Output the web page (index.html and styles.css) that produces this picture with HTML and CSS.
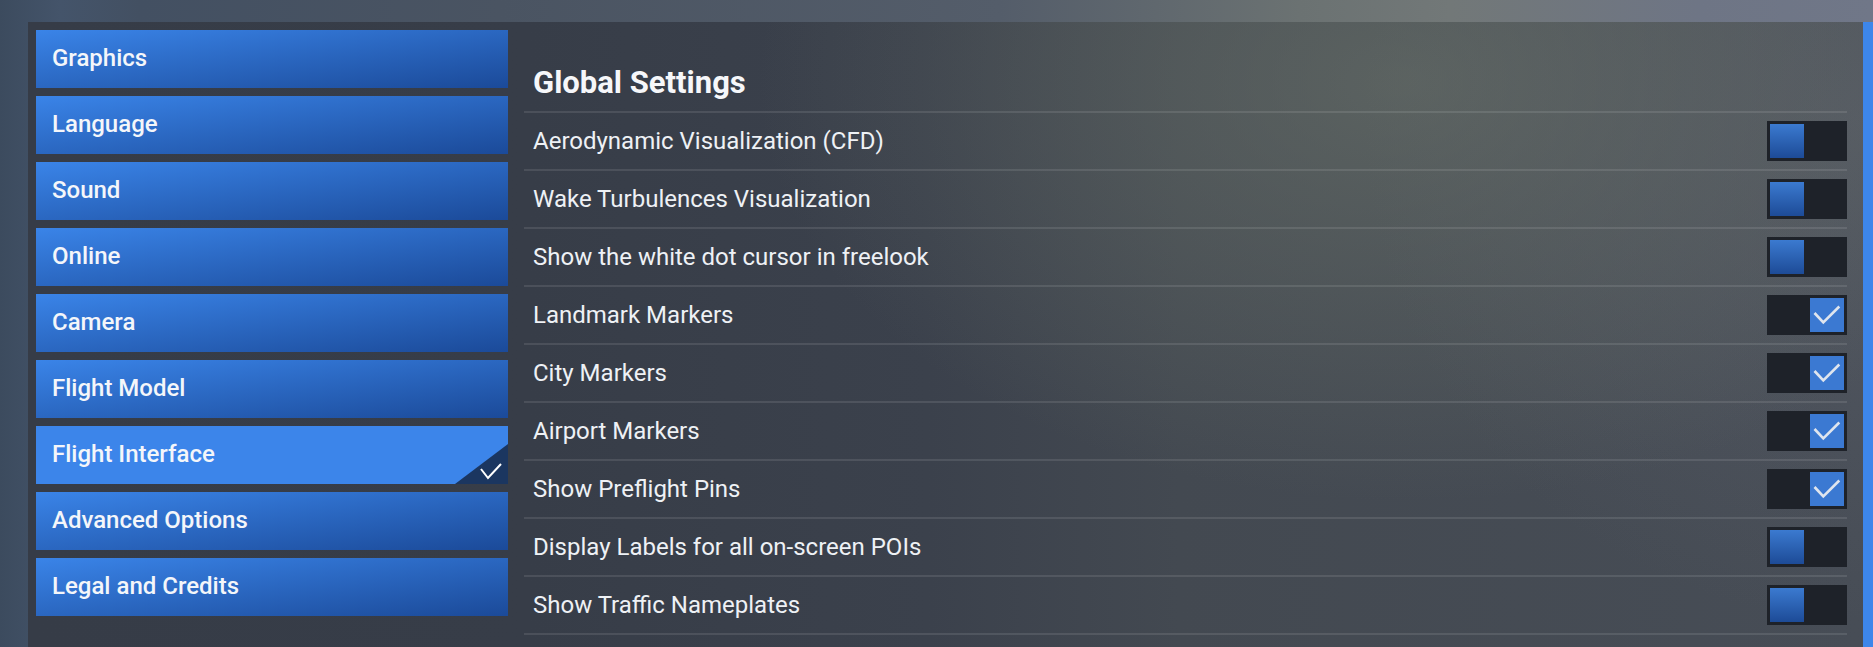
FILE: index.html
```html
<!DOCTYPE html>
<html>
<head>
<meta charset="utf-8">
<link rel="stylesheet" href="styles.css">
</head>
<body>
<div class="stage">
  <div class="panel">
    <nav class="menu">
      <div class="item">Graphics</div>
      <div class="item">Language</div>
      <div class="item">Sound</div>
      <div class="item">Online</div>
      <div class="item">Camera</div>
      <div class="item">Flight Model</div>
      <div class="item selected">Flight Interface
        <span class="corner"><svg viewBox="0 0 53 40" width="53" height="40"><polygon points="53,0 53,40 0,40" fill="#1b3660"/><polyline points="26,25 33,34 46,20" fill="none" stroke="#ffffff" stroke-width="2"/></svg></span>
      </div>
      <div class="item">Advanced Options</div>
      <div class="item">Legal and Credits</div>
    </nav>
    <section class="content">
      <h1 class="title">Global Settings</h1>
      <div class="rows">
        <div class="row"><span class="label">Aerodynamic Visualization (CFD)</span><span class="toggle"><span class="knob"></span></span></div>
        <div class="row"><span class="label">Wake Turbulences Visualization</span><span class="toggle"><span class="knob"></span></span></div>
        <div class="row"><span class="label">Show the white dot cursor in freelook</span><span class="toggle"><span class="knob"></span></span></div>
        <div class="row"><span class="label">Landmark Markers</span><span class="toggle on"><span class="knob"><svg viewBox="0 0 34 34" width="34" height="34"><polyline points="4.5,15 13.3,24.5 29.3,8.5" fill="none" stroke="#dfe5ee" stroke-width="2.6"/></svg></span></span></div>
        <div class="row"><span class="label">City Markers</span><span class="toggle on"><span class="knob"><svg viewBox="0 0 34 34" width="34" height="34"><polyline points="4.5,15 13.3,24.5 29.3,8.5" fill="none" stroke="#dfe5ee" stroke-width="2.6"/></svg></span></span></div>
        <div class="row"><span class="label">Airport Markers</span><span class="toggle on"><span class="knob"><svg viewBox="0 0 34 34" width="34" height="34"><polyline points="4.5,15 13.3,24.5 29.3,8.5" fill="none" stroke="#dfe5ee" stroke-width="2.6"/></svg></span></span></div>
        <div class="row"><span class="label">Show Preflight Pins</span><span class="toggle on"><span class="knob"><svg viewBox="0 0 34 34" width="34" height="34"><polyline points="4.5,15 13.3,24.5 29.3,8.5" fill="none" stroke="#dfe5ee" stroke-width="2.6"/></svg></span></span></div>
        <div class="row"><span class="label">Display Labels for all on-screen POIs</span><span class="toggle"><span class="knob"></span></span></div>
        <div class="row"><span class="label">Show Traffic Nameplates</span><span class="toggle"><span class="knob"></span></span></div>
      </div>
    </section>
  </div>
  <div class="edge"></div>
</div>
</body>
</html>
```
FILE: styles.css
```css
* { box-sizing: border-box; }
html, body { margin: 0; padding: 0; }
body {
  width: 1873px;
  height: 647px;
  overflow: hidden;
  font-family: Roboto, "Liberation Sans", sans-serif;
  color: #f1f3f7;
  background:
    linear-gradient(to right, #3c4b5e 0, #44546a 60px, #435062 140px, #4a5462 500px, #545d6a 1000px, #6b7272 1300px, #727878 1450px, #6e7585 1700px, #707788 100%);
}
.stage {
  display: flex;
  padding-top: 22px;
  padding-left: 28px;
  height: 647px;
}
.panel {
  flex: 1;
  display: flex;
  gap: 16px;
  padding: 8px 16px 0 8px;
  background:
    radial-gradient(ellipse 650px 420px at 1380px 60px, rgba(110,118,108,0.55), rgba(110,118,108,0) 100%),
    radial-gradient(ellipse 500px 500px at 1835px 100px, rgba(100,104,115,0.4), rgba(100,104,115,0) 100%),
    linear-gradient(to right, #363c47 0, #373d48 500px, #3b414c 900px, #434951 1150px, #474d56 100%);
}
.edge {
  width: 10px;
  background: #3d86ea;
}
.menu {
  width: 472px;
  display: flex;
  flex-direction: column;
  gap: 8px;
}
.item {
  position: relative;
  height: 58px;
  padding-left: 16px;
  padding-bottom: 2px;
  display: flex;
  align-items: center;
  font-size: 24px;
  font-weight: 500;
  color: #f4f6fa;
  background: linear-gradient(to bottom right, #3a84e8, #1b4a99);
}
.item.selected {
  background: #3c85ea;
}
.corner {
  position: absolute;
  right: 0;
  bottom: 0;
  width: 53px;
  height: 40px;
}
.corner svg { display: block; }
.content {
  flex: 1;
  display: flex;
  flex-direction: column;
}
.title {
  margin: 0;
  padding: 35px 0 10px 9px;
  font-size: 31px;
  line-height: 36px;
  font-weight: 700;
  color: #f6f7fa;
}
.rows {
  border-top: 2px solid rgba(255,255,255,0.1);
}
.row {
  height: 58px;
  border-bottom: 2px solid rgba(255,255,255,0.1);
  display: flex;
  align-items: center;
  justify-content: space-between;
  padding-left: 9px;
}
.label {
  font-size: 24px;
  font-weight: 400;
  color: #eef1f5;
}
.toggle {
  width: 80px;
  height: 40px;
  padding: 3px;
  background: #1e2229;
  display: flex;
  justify-content: flex-start;
}
.toggle.on { justify-content: flex-end; }
.knob {
  width: 34px;
  height: 34px;
  background: linear-gradient(to bottom, #3b7ad0, #1d4b97);
}
.toggle.on .knob { background: #3b79d2; }
.knob svg { display: block; }
```
